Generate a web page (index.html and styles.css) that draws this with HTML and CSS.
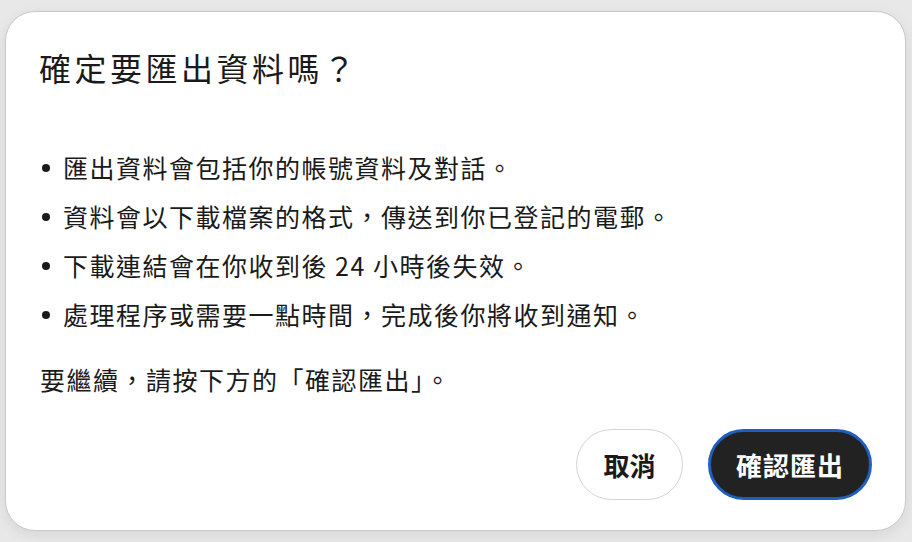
FILE: index.html
```html
<!DOCTYPE html>
<html lang="zh-Hant">
<head>
<meta charset="utf-8">
<link rel="stylesheet" href="styles.css">
</head>
<body>
<div class="dialog">
  <h1 class="title">確定要匯出資料嗎？</h1>
  <ul class="list">
    <li>匯出資料會包括你的帳號資料及對話。</li>
    <li>資料會以下載檔案的格式，傳送到你已登記的電郵。</li>
    <li>下載連結會在你收到後 24 小時後失效。</li>
    <li>處理程序或需要一點時間，完成後你將收到通知。</li>
  </ul>
  <p class="note">要繼續，請按下方的「確認匯出」。</p>
  <div class="actions">
    <button class="btn btn-cancel">取消</button>
    <button class="btn btn-confirm">確認匯出</button>
  </div>
</div>
</body>
</html>
```
FILE: styles.css
```css
html, body {
  margin: 0;
  padding: 0;
  background: #e8e8e8;
  width: 912px;
  height: 542px;
  overflow: hidden;
}
body {
  padding: 11px 0 0 5px;
  box-sizing: border-box;
  font-family: "Noto Sans CJK TC", "Noto Sans", sans-serif;
  color: #1a1a1a;
}
.dialog {
  width: 901px;
  height: 520px;
  box-sizing: border-box;
  background: #fff;
  border: 1px solid #c8c8c8;
  border-radius: 30px;
  padding: 37px 33px 0 34px;
  box-shadow: 0 4px 14px rgba(0,0,0,0.08);
}
.title {
  margin: 0 0 0 -1px;
  font-size: 32px;
  line-height: 36px;
  font-weight: 400;
  letter-spacing: 3.5px;
}
.list {
  margin: 58px 0 0 0;
  padding: 0 0 0 23px;
  list-style: none;
}
.list li {
  position: relative;
  font-size: 25px;
  line-height: 49px;
  letter-spacing: 1.5px;
}
.list li::before {
  content: "";
  position: absolute;
  left: -21px;
  top: 21px;
  width: 8px;
  height: 8px;
  border-radius: 50%;
  background: #1a1a1a;
}
.note {
  margin: 16px 0 0 0;
  font-size: 25px;
  line-height: 49px;
  letter-spacing: 1.5px;
}
.actions {
  display: flex;
  justify-content: flex-end;
  gap: 25px;
  margin-top: 25px;
}
.btn {
  font-family: inherit;
  font-size: 26px;
  font-weight: 700;
  height: 71px;
  border-radius: 36px;
  box-sizing: border-box;
  cursor: pointer;
}
.btn-cancel {
  width: 107px;
  background: #fff;
  border: 1px solid #d4d4d4;
  color: #1a1a1a;
}
.btn-confirm {
  width: 164px;
  background: #222;
  border: 3px solid #1f5fbf;
  color: #fff;
  letter-spacing: 1px;
}
```
